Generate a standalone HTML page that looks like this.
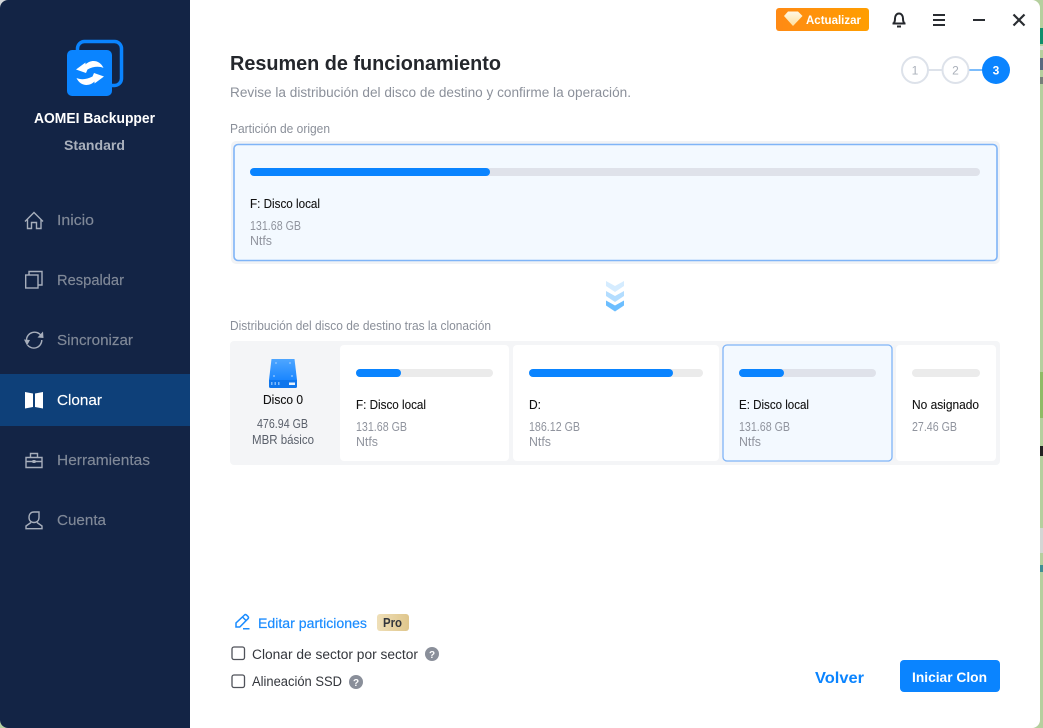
<!DOCTYPE html>
<html lang="es"><head><meta charset="utf-8"><title>AOMEI Backupper</title>
<style>
html,body{margin:0;padding:0;width:1043px;height:728px;overflow:hidden;background:#b5cf9e}
svg{display:block}
text{font-family:"Liberation Sans",sans-serif;white-space:pre}
.nav{font-size:14.5px;fill:#808998;stroke:#808998;stroke-width:.15}
.ic{fill:none;stroke:#a7aebb;stroke-width:1.4}
.h{font-size:12.5px;fill:#8a8f99}
.n{font-size:12.5px;fill:#111;stroke:#111;stroke-width:.1}
.s{font-size:13px;fill:#90949e}
.d{font-size:13px;fill:#5a606b}
.o{font-size:13.5px;fill:#33363c}
</style></head><body>
<svg width="1043" height="728" viewBox="0 0 1043 728" xmlns="http://www.w3.org/2000/svg">
<defs>
<clipPath id="win"><rect x="0" y="0" width="1040" height="728" rx="8"/></clipPath>
<linearGradient id="up" x1="0" x2="1" y1="0" y2="0"><stop offset="0" stop-color="#ff8a14"/><stop offset="1" stop-color="#ff9e00"/></linearGradient>
<linearGradient id="dia" x1="0" x2="0" y1="0" y2="1"><stop offset="0" stop-color="#fff8e6"/><stop offset="1" stop-color="#ffdf9c"/></linearGradient>
<linearGradient id="pro" x1="0" x2="1" y1="0" y2="0"><stop offset="0" stop-color="#efdfb8"/><stop offset="1" stop-color="#dfc68c"/></linearGradient>
<linearGradient id="disk" x1="0" x2="0" y1="0" y2="1"><stop offset="0" stop-color="#4ea6ff"/><stop offset="1" stop-color="#1a86ff"/></linearGradient>
</defs>

<!-- backdrop strip -->
<rect x="1040" y="28" width="3" height="16" fill="#0e8f6c"/>
<rect x="1040" y="46" width="3" height="4" fill="#d8dcd8"/>
<rect x="1040" y="58" width="3" height="12" fill="#5a6a80"/>
<rect x="1040" y="77" width="3" height="7" fill="#77807a"/>
<rect x="1040" y="372" width="3" height="46" fill="#8fbb66"/>
<rect x="1040" y="446" width="3" height="10" fill="#222"/>
<rect x="1040" y="528" width="3" height="25" fill="#d3d6d4"/>
<rect x="1040" y="565" width="3" height="7" fill="#3f8f94"/>
<path d="M0 0H8A8 8 0 0 0 0 8Z" fill="#d5d8da"/>

<g clip-path="url(#win)">
<rect width="1040" height="728" fill="#fff"/>
<rect width="190" height="728" fill="#132445"/>
<rect y="374" width="190" height="52" fill="#0e4079"/>
</g>

<!-- logo -->
<rect x="77.500" y="41.500" width="44" height="44" rx="7" fill="none" stroke="#0a84ff" stroke-width="3.500"/>
<rect x="67" y="50" width="45" height="46" rx="5" fill="#0a84ff"/>
<path d="M76 69.500L85.500 62.500V64.500C91 59 100 60 103.500 68C99 66 93 66.500 87.500 69.500L86 73Z" fill="#fff"/>
<path d="M76 69.500L85.500 62.500V64.500C91 59 100 60 103.500 68C99 66 93 66.500 87.500 69.500L86 73Z" fill="#fff" transform="rotate(180 90 73)"/>
<text x="34" y="123" font-size="14.500" font-weight="700" fill="#fff" textLength="121" lengthAdjust="spacingAndGlyphs">AOMEI Backupper</text>
<text x="64" y="150" font-size="13.500" font-weight="700" fill="#a9b0bc" textLength="61" lengthAdjust="spacingAndGlyphs">Standard</text>

<!-- nav icons -->
<path class="ic" d="M25 221.500L34 212.500L43 221.500M27.500 219.500V228.500H31.500V222.500H36.500V228.500H41V219.500"/>
<rect class="ic" x="25.700" y="275" width="12.300" height="13"/>
<path class="ic" d="M29 274.500V271.500H42V285H38.500"/>
<path class="ic" d="M26.500 340A8 8 0 0 1 41 335.500M41.800 340A8 8 0 0 1 27.500 345"/>
<path d="M37.500 337.500L43.500 338L43 331.500Z M24 339.500L30 340L27 345.500Z" fill="#a7aebb"/>
<path d="M25 392L33 393.500V407L25 408.500Z M35 393.500L43 392V408.500L35 407Z" fill="#fff"/>
<path class="ic" d="M26 457.500H42V467.500H26ZM26 461.500H42M30.500 457.500V453.500H37.500V457.500"/>
<rect x="32.500" y="460" width="3" height="3" fill="#a7aebb"/>
<path class="ic" d="M29 517.500C29 514 31 512 34 512H39V517.500C39 520.500 37 522.500 34 522.500C31 522.500 29 520.500 29 517.500ZM31 522.500L26 526V528.700H42V526L37 522.500"/>

<text class="nav" x="57" y="225" textLength="37" lengthAdjust="spacingAndGlyphs">Inicio</text>
<text class="nav" x="57" y="285" textLength="67" lengthAdjust="spacingAndGlyphs">Respaldar</text>
<text class="nav" x="57" y="345" textLength="76" lengthAdjust="spacingAndGlyphs">Sincronizar</text>
<text class="nav" x="57" y="405" textLength="45" lengthAdjust="spacingAndGlyphs" style="fill:#fff;stroke:#fff">Clonar</text>
<text class="nav" x="57" y="465" textLength="93" lengthAdjust="spacingAndGlyphs">Herramientas</text>
<text class="nav" x="57" y="525" textLength="49" lengthAdjust="spacingAndGlyphs">Cuenta</text>

<!-- top bar -->
<rect x="776" y="8" width="93" height="23" rx="3" fill="url(#up)"/>
<path d="M788 11.500H798L802.500 16L793 26L784 16Z" fill="url(#dia)"/>
<text x="806" y="24" font-size="12" font-weight="700" fill="#fff" textLength="55" lengthAdjust="spacingAndGlyphs">Actualizar</text>
<path d="M893.500 23.500C895 22 895 20 895 18.500C895 15.500 896.800 13.500 899 13.500C901.200 13.500 903 15.500 903 18.500C903 20 903 22 904.500 23.500Z" fill="none" stroke="#24272c" stroke-width="2" stroke-linejoin="round"/>
<path d="M892.500 23.500H905.500" stroke="#24272c" stroke-width="2"/>
<path d="M897 26.500H901" stroke="#24272c" stroke-width="2"/>
<path d="M933 15H945M933 20H945M933 25H945" stroke="#2a2d32" stroke-width="2"/>
<path d="M973 20H985" stroke="#2a2d32" stroke-width="2"/>
<path d="M1013.500 14.500L1024.500 25.500M1024.500 14.500L1013.500 25.500" stroke="#2a2d32" stroke-width="2.200"/>

<!-- steps -->
<path d="M928 70H943" stroke="#dde2ea" stroke-width="2"/>
<path d="M968 70H983" stroke="#7cbcfb" stroke-width="2"/>
<circle cx="915" cy="70" r="13" fill="#fff" stroke="#dde2ea" stroke-width="2"/>
<circle cx="955.500" cy="70" r="13" fill="#fff" stroke="#dde2ea" stroke-width="2"/>
<circle cx="996" cy="70" r="14" fill="#0a84ff"/>
<text x="915" y="74.500" font-size="12" fill="#aab0ba" text-anchor="middle">1</text>
<text x="955.500" y="74.500" font-size="12" fill="#aab0ba" text-anchor="middle">2</text>
<text x="996" y="74.500" font-size="12" font-weight="700" fill="#fff" text-anchor="middle">3</text>

<!-- headings -->
<text x="230" y="70" font-size="20" font-weight="700" fill="#24272c" textLength="271" lengthAdjust="spacingAndGlyphs">Resumen de funcionamiento</text>
<text x="230" y="97" font-size="13.500" fill="#8b909a" textLength="401" lengthAdjust="spacingAndGlyphs">Revise la distribución del disco de destino y confirme la operación.</text>
<text class="h" x="230" y="133" textLength="100" lengthAdjust="spacingAndGlyphs">Partición de origen</text>

<!-- source card -->
<rect x="231" y="141" width="769" height="123" rx="5" fill="#f1f3f6"/>
<rect x="234" y="144.500" width="763" height="116" rx="4" fill="#f3f9ff" stroke="#7fb4f7" stroke-width="1.600"/>
<rect x="250" y="168" width="730" height="8" rx="4" fill="#dfe2ea"/>
<rect x="250" y="168" width="240" height="8" rx="4" fill="#0a84ff"/>
<text class="n" x="250" y="208" textLength="70" lengthAdjust="spacingAndGlyphs">F: Disco local</text>
<text class="s" x="250" y="230" textLength="51" lengthAdjust="spacingAndGlyphs">131.68 GB</text>
<text class="s" x="250" y="245" textLength="22" lengthAdjust="spacingAndGlyphs">Ntfs</text>

<!-- chevrons -->
<path d="M606 281L615 286L624 281V286L615 292L606 286Z" fill="#d5ecff"/>
<path d="M606 291L615 296L624 291V296L615 302L606 296Z" fill="#b3ddff"/>
<path d="M606 300.500L615 305.500L624 300.500V305.500L615 311.500L606 305.500Z" fill="#6cbeff"/>

<text class="h" x="230" y="330" textLength="261" lengthAdjust="spacingAndGlyphs">Distribución del disco de destino tras la clonación</text>

<!-- destination panel -->
<rect x="230" y="341" width="770" height="124" rx="4" fill="#f4f5f7"/>
<path d="M271.500 359H294.500L297 380H269Z" fill="url(#disk)"/>
<path d="M269 380H297V386.500Q297 388 295.500 388H270.500Q269 388 269 386.500Z" fill="#0f76ec"/>
<g fill="#8cc4ff" opacity=".7"><rect x="275" y="362" width="2" height="2"/><rect x="289" y="362" width="2" height="2"/><rect x="273" y="375" width="2" height="2"/><rect x="291" y="375" width="2" height="2"/></g>
<g fill="#9cccff" opacity=".8"><rect x="271" y="382" width="1.500" height="3"/><rect x="274.500" y="382" width="1.500" height="3"/><rect x="278" y="382" width="1.500" height="3"/></g>
<rect x="289" y="382.500" width="6" height="2.500" fill="#e6f2ff"/>
<text class="n" x="263" y="404" textLength="40" lengthAdjust="spacingAndGlyphs">Disco 0</text>
<text class="d" x="257" y="428" textLength="51" lengthAdjust="spacingAndGlyphs">476.94 GB</text>
<text class="d" x="252" y="444" textLength="62" lengthAdjust="spacingAndGlyphs">MBR básico</text>

<rect x="340" y="345" width="169" height="116" rx="4" fill="#fff"/>
<rect x="356" y="369" width="137" height="8" rx="4" fill="#ebebeb"/>
<rect x="356" y="369" width="45" height="8" rx="4" fill="#0a84ff"/>
<text class="n" x="356" y="409" textLength="70" lengthAdjust="spacingAndGlyphs">F: Disco local</text>
<text class="s" x="356" y="431" textLength="51" lengthAdjust="spacingAndGlyphs">131.68 GB</text>
<text class="s" x="356" y="446" textLength="22" lengthAdjust="spacingAndGlyphs">Ntfs</text>

<rect x="513" y="345" width="206" height="116" rx="4" fill="#fff"/>
<rect x="529" y="369" width="174" height="8" rx="4" fill="#ebebeb"/>
<rect x="529" y="369" width="144" height="8" rx="4" fill="#0a84ff"/>
<text class="n" x="529" y="409" textLength="12" lengthAdjust="spacingAndGlyphs">D:</text>
<text class="s" x="529" y="431" textLength="51" lengthAdjust="spacingAndGlyphs">186.12 GB</text>
<text class="s" x="529" y="446" textLength="22" lengthAdjust="spacingAndGlyphs">Ntfs</text>

<rect x="723" y="345" width="169" height="116" rx="4" fill="#f3f9ff" stroke="#7fb4f7" stroke-width="1.300"/>
<rect x="739" y="369" width="137" height="8" rx="4" fill="#dfe2ea"/>
<rect x="739" y="369" width="45" height="8" rx="4" fill="#0a84ff"/>
<text class="n" x="739" y="409" textLength="70" lengthAdjust="spacingAndGlyphs">E: Disco local</text>
<text class="s" x="739" y="431" textLength="51" lengthAdjust="spacingAndGlyphs">131.68 GB</text>
<text class="s" x="739" y="446" textLength="22" lengthAdjust="spacingAndGlyphs">Ntfs</text>

<rect x="896" y="345" width="100" height="116" rx="4" fill="#fff"/>
<rect x="912" y="369" width="68" height="8" rx="4" fill="#ebebeb"/>
<text class="n" x="912" y="409" textLength="67" lengthAdjust="spacingAndGlyphs">No asignado</text>
<text class="s" x="912" y="431" textLength="45" lengthAdjust="spacingAndGlyphs">27.46 GB</text>

<!-- bottom options -->
<path d="M236 627V623L244.500 615Q245.500 614 246.800 615.300L248 616.500Q249 617.700 248 618.700L239.800 627ZM242.500 617L246 620.500M243 628.700H249.500" fill="none" stroke="#1a8cff" stroke-width="1.500"/>
<text x="258" y="628" font-size="13.500" fill="#1a8cff" stroke="#1a8cff" stroke-width=".2" textLength="109" lengthAdjust="spacingAndGlyphs">Editar particiones</text>
<rect x="377" y="614" width="32" height="17" rx="3" fill="url(#pro)"/>
<text x="383" y="627" font-size="12.500" font-weight="700" fill="#33363c" textLength="19" lengthAdjust="spacingAndGlyphs">Pro</text>

<rect x="232" y="647" width="12.500" height="12.500" rx="2" fill="#fff" stroke="#4f5259" stroke-width="1.300"/>
<text class="o" x="252" y="659" textLength="166" lengthAdjust="spacingAndGlyphs">Clonar de sector por sector</text>
<circle cx="432" cy="654" r="7" fill="#8a8f9a"/>
<text x="432" y="658" font-size="10" font-weight="700" fill="#fff" text-anchor="middle">?</text>
<rect x="232" y="675" width="12.500" height="12.500" rx="2" fill="#fff" stroke="#4f5259" stroke-width="1.300"/>
<text class="o" x="252" y="686" textLength="90" lengthAdjust="spacingAndGlyphs">Alineación SSD</text>
<circle cx="356" cy="682" r="7" fill="#8a8f9a"/>
<text x="356" y="686" font-size="10" font-weight="700" fill="#fff" text-anchor="middle">?</text>

<text x="815" y="683" font-size="15.500" font-weight="700" fill="#0a84ff" textLength="49" lengthAdjust="spacingAndGlyphs">Volver</text>
<rect x="900" y="660" width="100" height="32" rx="4" fill="#0a84ff"/>
<text x="912" y="682" font-size="13.500" font-weight="700" fill="#fff" textLength="75" lengthAdjust="spacingAndGlyphs">Iniciar Clon</text>
</svg>
</body></html>
